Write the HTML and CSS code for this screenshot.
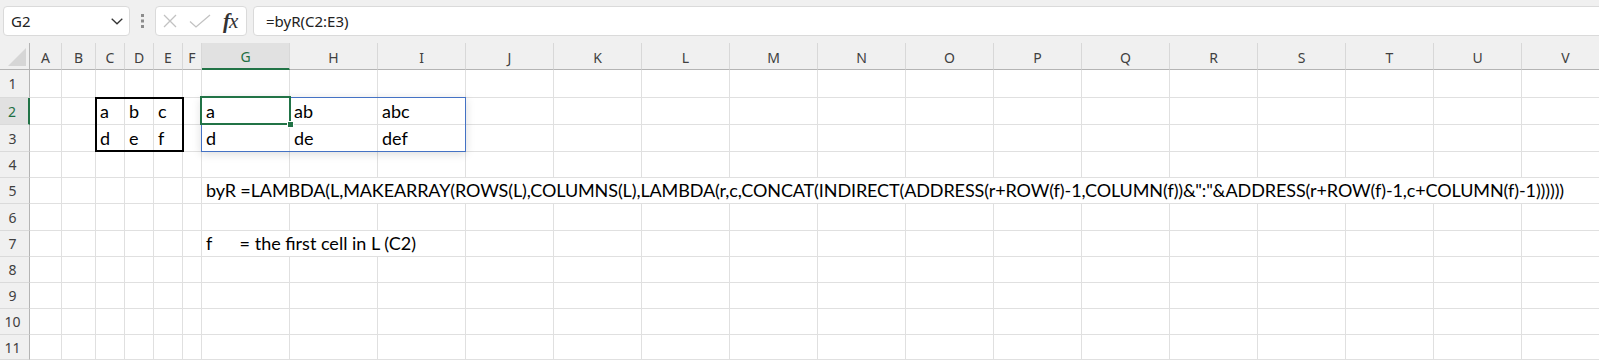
FILE: index.html
```html
<!DOCTYPE html>
<html lang="en">

<head>
    <meta charset="UTF-8">
    <title>Book1 - Excel</title>
    <link rel="stylesheet" href="styles.css">
</head>

<body>
    <!-- Formula bar -->
    <div class="toolbar">
        <div class="namebox">
            <span>G2</span>
            <svg width="12" height="7" viewBox="0 0 12 7"><polyline points="0.7,0.7 6,5.8 11.3,0.7" fill="none" stroke="#333" stroke-width="1.3"/></svg>
        </div>
        <svg class="grip" width="3" height="14" viewBox="0 0 3 14"><rect x="0" y="0" width="3" height="3" fill="#8c8c8c"/><rect x="0" y="5.5" width="3" height="3" fill="#8c8c8c"/><rect x="0" y="11" width="3" height="3" fill="#8c8c8c"/></svg>
        <div class="fxbox">
            <svg class="cancel" width="14" height="14" viewBox="0 0 14 14"><path d="M1 1 L13 13 M13 1 L1 13" stroke="#c2c2c2" stroke-width="1.3"/></svg>
            <svg class="enter" width="22" height="14" viewBox="0 0 22 14"><polyline points="1,7.5 7,13 21,1" fill="none" stroke="#c2c2c2" stroke-width="1.3"/></svg>
            <span class="fx"><i>f</i>x</span>
        </div>
        <div class="formula">=byR(C2:E3)</div>
    </div>

    <!-- Sheet -->
    <div class="sheet">
        <div class="row head">
            <div class="corner"><svg width="18" height="18" viewBox="0 0 18 18"><polygon points="18,0 18,18 0,18" fill="#d6d6d6"/></svg></div>
            <div>A</div><div>B</div><div>C</div><div>D</div><div>E</div><div>F</div>
            <div class="on">G</div><div>H</div><div>I</div><div>J</div><div>K</div><div>L</div>
            <div>M</div><div>N</div><div>O</div><div>P</div><div>Q</div><div>R</div>
            <div>S</div><div>T</div><div>U</div><div>V</div>
        </div>

        <div class="row h28">
            <div class="rh">1</div>
            <div></div><div></div><div></div><div></div><div></div><div></div><div></div><div></div><div></div><div></div><div></div>
            <div></div><div></div><div></div><div></div><div></div><div></div><div></div><div></div><div></div><div></div><div></div>
        </div>

        <div class="row h27">
            <div class="rh on">2</div>
            <div></div><div></div><div>a</div><div>b</div><div>c</div><div></div>
            <div>a</div><div>ab</div><div>abc</div>
            <div></div><div></div><div></div><div></div><div></div><div></div><div></div><div></div><div></div><div></div><div></div><div></div><div></div>
        </div>

        <div class="row h27">
            <div class="rh">3</div>
            <div></div><div></div><div>d</div><div>e</div><div>f</div><div></div>
            <div>d</div><div>de</div><div>def</div>
            <div></div><div></div><div></div><div></div><div></div><div></div><div></div><div></div><div></div><div></div><div></div><div></div><div></div>
        </div>

        <div class="row">
            <div class="rh">4</div>
            <div></div><div></div><div></div><div></div><div></div><div></div><div></div><div></div><div></div><div></div><div></div>
            <div></div><div></div><div></div><div></div><div></div><div></div><div></div><div></div><div></div><div></div><div></div>
        </div>

        <div class="row">
            <div class="rh">5</div>
            <div></div><div></div><div></div><div></div><div></div><div></div>
            <div class="spill-g-v">byR =LAMBDA(L,MAKEARRAY(ROWS(L),COLUMNS(L),LAMBDA(r,c,CONCAT(INDIRECT(ADDRESS(r+ROW(f)-1,COLUMN(f))&amp;":"&amp;ADDRESS(r+ROW(f)-1,c+COLUMN(f)-1))))))</div>
        </div>

        <div class="row h27">
            <div class="rh">6</div>
            <div></div><div></div><div></div><div></div><div></div><div></div><div></div><div></div><div></div><div></div><div></div>
            <div></div><div></div><div></div><div></div><div></div><div></div><div></div><div></div><div></div><div></div><div></div>
        </div>

        <div class="row">
            <div class="rh">7</div>
            <div></div><div></div><div></div><div></div><div></div><div></div>
            <div class="spill-g-i">f      = the first cell in L (C2)</div>
            <div></div><div></div><div></div><div></div><div></div><div></div><div></div><div></div><div></div><div></div><div></div><div></div><div></div>
        </div>

        <div class="row">
            <div class="rh">8</div>
            <div></div><div></div><div></div><div></div><div></div><div></div><div></div><div></div><div></div><div></div><div></div>
            <div></div><div></div><div></div><div></div><div></div><div></div><div></div><div></div><div></div><div></div><div></div>
        </div>

        <div class="row">
            <div class="rh">9</div>
            <div></div><div></div><div></div><div></div><div></div><div></div><div></div><div></div><div></div><div></div><div></div>
            <div></div><div></div><div></div><div></div><div></div><div></div><div></div><div></div><div></div><div></div><div></div>
        </div>

        <div class="row">
            <div class="rh">10</div>
            <div></div><div></div><div></div><div></div><div></div><div></div><div></div><div></div><div></div><div></div><div></div>
            <div></div><div></div><div></div><div></div><div></div><div></div><div></div><div></div><div></div><div></div><div></div>
        </div>

        <div class="row h25">
            <div class="rh">11</div>
            <div></div><div></div><div></div><div></div><div></div><div></div><div></div><div></div><div></div><div></div><div></div>
            <div></div><div></div><div></div><div></div><div></div><div></div><div></div><div></div><div></div><div></div><div></div>
        </div>

        <!-- range borders on top of the cells -->
        <div class="range-source"></div>
        <div class="range-spill"></div>
        <div class="range-active"><span class="handle"></span></div>
    </div>
</body>

</html>
```

FILE: styles.css
```css
/* Global */
* {
    box-sizing: border-box;
    margin: 0;
    padding: 0;
}

body {
    width: 1599px;
    height: 360px;
    overflow: hidden;
    background: #fff;
    font-family: 'Noto Sans', sans-serif;
    color: #222;
}

/* Formula bar */
.toolbar {
    height: 43px;
    background: #f0f0f0;
    display: flex;
    align-items: flex-start;
    padding: 6px 0 0 3px;
}

.namebox {
    width: 127px;
    height: 30px;
    background: #fff;
    border: 1px solid #dadada;
    border-radius: 4px;
    display: flex;
    align-items: center;
    justify-content: space-between;
    padding: 0 6px 0 7px;
    font-size: 15px;
}

.grip {
    margin: 8px 0 0 11px;
}

.fxbox {
    width: 92px;
    height: 30px;
    margin-left: 11px;
    background: #fff;
    border: 1px solid #dadada;
    border-radius: 4px;
    display: flex;
    align-items: center;
    padding-left: 7px;
}

.fxbox .enter {
    margin-left: 12px;
}

.fx {
    margin-left: 12px;
    font-family: 'Liberation Serif', serif;
    font-style: italic;
    font-size: 21px;
    color: #333;
    letter-spacing: -1px;
}

.fx i {
    font-weight: bold;
}

.formula {
    flex: 1;
    height: 30px;
    margin-left: 6px;
    margin-right: -10px;
    background: #fff;
    border: 1px solid #dadada;
    border-radius: 4px;
    padding-left: 12px;
    font-size: 15px;
    line-height: 28px;
}

/* Sheet grid */
.sheet {
    position: relative;
}

.row {
    display: grid;
    grid-template-columns: 30px 32px 34px 29px 29px 29px 19px repeat(16, 88px);
    height: 26px;
}

.row.h28 { height: 28px; }
.row.h27 { height: 27px; }
.row.h25 { height: 25px; }

.row > div {
    border-right: 1px solid #e0e0e0;
    border-bottom: 1px solid #e0e0e0;
    padding: 0 4px 2px;
    display: flex;
    align-items: flex-end;
    font-family: 'Lato', sans-serif;
    font-size: 18px;
    color: #000;
    white-space: pre;
}

/* column headers */
.row.head {
    height: 27px;
    background: #f0f0f0;
}

.row.head > div {
    border-right-color: #d8d8d8;
    border-bottom-color: #b4b4b4;
    justify-content: center;
    align-items: center;
    padding: 2px 0 0;
    font-family: 'Noto Sans', sans-serif;
    font-size: 14px;
    color: #404040;
}

.row.head > .corner {
    border-right-color: #b4b4b4;
    align-items: flex-start;
    justify-content: flex-start;
    padding: 5px 0 0 8px;
}

.row.head > .on {
    background: #e1e1e1;
    color: #1e6f43;
    border-bottom: 2px solid #217346;
}

/* row headers */
.row > .rh {
    background: #f0f0f0;
    border-right-color: #b4b4b4;
    border-bottom-color: #dadada;
    justify-content: center;
    align-items: center;
    padding: 0 4px 0 0;
    font-family: 'Noto Sans', sans-serif;
    font-size: 14px;
    color: #404040;
}

.row > .rh.on {
    background: #e1e1e1;
    color: #1e6f43;
    border-right: 2px solid #217346;
}

/* text that runs over the next cells */
.spill-g-v {
    grid-column: 8 / 24;
    letter-spacing: -0.11px;
}

.spill-g-i {
    grid-column: 8 / 11;
}

/* Range borders */
.range-source {
    position: absolute;
    left: 95px;
    top: 54px;
    width: 89px;
    height: 55px;
    border: 2px solid #000;
}

.range-spill {
    position: absolute;
    left: 201px;
    top: 54px;
    width: 265px;
    height: 55px;
    border: 1px solid #4472c4;
    box-shadow: 0 2px 9px rgba(0, 0, 0, 0.14);
}

.range-active {
    position: absolute;
    left: 200px;
    top: 53px;
    width: 91px;
    height: 29px;
    border: 2px solid #217346;
}

.handle {
    position: absolute;
    right: -5px;
    bottom: -5px;
    width: 7px;
    height: 7px;
    background: #217346;
    border: 1px solid #fff;
}
```
